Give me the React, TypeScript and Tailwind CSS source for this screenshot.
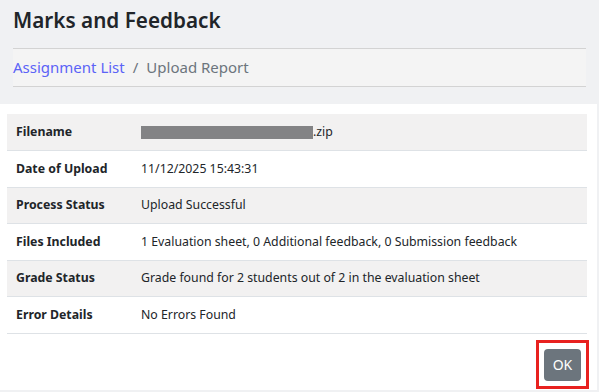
const rows: { label: string; value: React.ReactNode }[] = [
  {
    label: "Filename",
    value: (
      <span className="flex items-center">
        <span className="inline-block h-[13px] w-[172px] bg-[#838385]" />
        <span>.zip</span>
      </span>
    ),
  },
  { label: "Date of Upload", value: "11/12/2025 15:43:31" },
  { label: "Process Status", value: "Upload Successful" },
  {
    label: "Files Included",
    value: "1 Evaluation sheet, 0 Additional feedback, 0 Submission feedback",
  },
  {
    label: "Grade Status",
    value: "Grade found for 2 students out of 2 in the evaluation sheet",
  },
  { label: "Error Details", value: "No Errors Found" },
];

export default function App() {
  return (
    <div className="h-[392px] w-[599px] overflow-hidden bg-[#f0f1f3] font-['Noto_Sans',sans-serif] text-[#212529]">
      <div className="px-[13px] pt-[5px]">
        <h1 className="text-[20.7px] font-semibold leading-[30px]">Marks and Feedback</h1>
        <nav className="mt-[13px] flex h-[39px] items-center border-y border-[#d3d3d3] bg-[#f4f4f4] text-[15px]">
          <span className="text-[#5b63f7]">Assignment List</span>
          <span className="px-2 text-[#6c757d]">/</span>
          <span className="text-[#6c757d]">Upload Report</span>
        </nav>
      </div>

      <div className="mt-[17px] mr-[2px] h-[286px] bg-white px-[7px] pt-[10px]">
        <table className="w-[580px] border-collapse text-[12.3px]">
          <tbody>
            {rows.map((row, i) => (
              <tr
                key={row.label}
                className={`h-[36.5px] border-b border-[#dee2e6] ${i % 2 === 0 ? "bg-[#f2f1f1]" : "bg-white"}`}
              >
                <td className="w-[125px] pl-[9px] font-bold">{row.label}</td>
                <td className="pl-[9px]">{row.value}</td>
              </tr>
            ))}
          </tbody>
        </table>
        <div className="mt-[6px] flex justify-end pr-[1px]">
          <div className="flex border-[3px] border-[#e8211f] px-[5px] pt-[6px] pb-[5px]">
            <button className="block h-[32px] w-[37px] rounded-[4px] bg-[#6c757d] text-[14px] leading-none text-white">
              OK
            </button>
          </div>
        </div>
      </div>
    </div>
  );
}
